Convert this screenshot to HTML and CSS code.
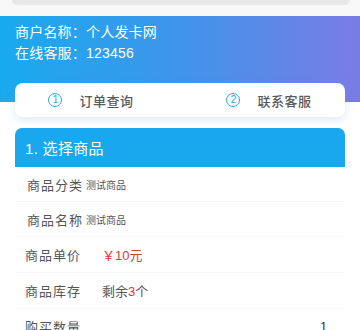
FILE: index.html
```html
<!DOCTYPE html>
<html>
<head>
<meta charset="utf-8">
<link rel="stylesheet" href="styles.css">
</head>
<body>
<div class="topbar"><div class="search"></div></div>
<div class="hero">
  <div class="line">商户名称：个人发卡网</div>
  <div class="line">在线客服：123456</div>
</div>
<div class="nav">
  <div class="nav-item"><span class="num">1</span><span class="lbl">订单查询</span></div>
  <div class="nav-item"><span class="num">2</span><span class="lbl">联系客服</span></div>
</div>
<div class="card">
  <div class="card-head">1. 选择商品</div>
  <div class="row row-a"><span class="key">商品分类</span><span class="small">测试商品</span></div>
  <div class="row row-a"><span class="key">商品名称</span><span class="small">测试商品</span></div>
  <div class="row"><span class="key wide">商品单价</span><span class="red">￥10元</span></div>
  <div class="row"><span class="key wide">商品库存</span><span class="val">剩余<span class="red">3</span>个</span></div>
  <div class="row"><span class="key wide">购买数量</span><span class="qty">1</span></div>
</div>
</body>
</html>
```
FILE: styles.css
```css
* { box-sizing: border-box; }
body {
  margin: 0;
  background: #ffffff;
  font-family: "Liberation Sans", "Noto Sans CJK SC", sans-serif;
  overflow: hidden;
}
.topbar {
  height: 16px;
  background: #f8f8f8;
  padding: 0 10px 0 12px;
}
.search {
  height: 5px;
  background: #e8e8e8;
  border-radius: 0 0 6px 6px;
}
.hero {
  height: 86px;
  background: linear-gradient(90deg, #19aaee 0%, #3f95ea 50%, #7b7be6 100%);
  padding: 6px 15px 0;
  color: #fff;
}
.line {
  font-size: 14px;
  line-height: 21px;
  letter-spacing: 0.2px;
}
.nav {
  margin: -19px 15px 0;
  height: 34px;
  background: #fff;
  border-radius: 8px;
  box-shadow: 0 3px 8px rgba(120, 170, 220, 0.25);
  display: flex;
  align-items: center;
  position: relative;
}
.nav-item {
  flex: 1;
  display: flex;
  align-items: center;
  justify-content: center;
  gap: 17px;
  font-size: 13px;
  color: #5a5a5a;
}
.nav-item:first-child { padding-right: 14px; }
.nav-item:last-child { padding-left: 12px; }
.num {
  width: 14px;
  height: 14px;
  border: 1.5px solid #2aa7e0;
  border-radius: 50%;
  color: #2aa7e0;
  font-size: 10px;
  display: inline-flex;
  align-items: center;
  justify-content: center;
  line-height: 1;
}
.lbl { font-weight: 500; letter-spacing: 0.5px; }
.card {
  margin: 11px 15px 0;
}
.card-head {
  height: 39px;
  background: #19a7ee;
  border-radius: 7px 7px 0 0;
  color: #fff;
  font-size: 15px;
  padding-left: 10px;
  display: flex;
  align-items: center;
  letter-spacing: 0.3px;
}
.row {
  height: 36px;
  display: flex;
  align-items: center;
  padding-left: 10px;
  border-bottom: 1px solid #f6f6f6;
  color: #555;
  font-size: 13px;
  position: relative;
}
.row-a { padding-left: 12px; height: 35px; }
.key { letter-spacing: 1px; margin-right: 3px; }
.key.wide { width: 77px; margin-right: 0; }
.small { font-size: 10px; color: #555; }
.red { color: #d33a3a; }
.val { color: #555; }
.qty {
  margin-left: auto;
  margin-right: 18px;
  color: #222;
  font-size: 12px;
}
```
